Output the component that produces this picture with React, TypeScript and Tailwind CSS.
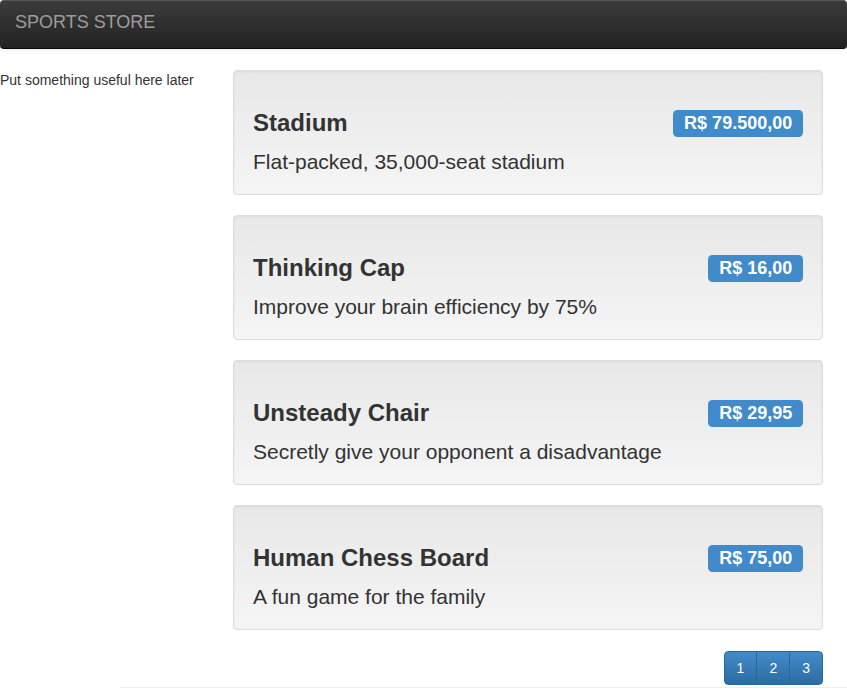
type Product = {
  name: string;
  description: string;
  price: string;
};

const products: Product[] = [
  {
    name: "Stadium",
    description: "Flat-packed, 35,000-seat stadium",
    price: "R$ 79.500,00",
  },
  {
    name: "Thinking Cap",
    description: "Improve your brain efficiency by 75%",
    price: "R$ 16,00",
  },
  {
    name: "Unsteady Chair",
    description: "Secretly give your opponent a disadvantage",
    price: "R$ 29,95",
  },
  {
    name: "Human Chess Board",
    description: "A fun game for the family",
    price: "R$ 75,00",
  },
];

function ProductWell({ product }: { product: Product }) {
  return (
    <div className="mb-[20px] h-[125px] rounded-[4px] border border-[#dcdcdc] bg-linear-to-b from-[#e8e8e8] to-[#f5f5f5] px-[19px] pt-[39px] shadow-[inset_0_1px_3px_rgba(0,0,0,0.05)]">
      <div className="flex items-start justify-between">
        <h3 className="text-[24px] font-bold leading-[26px] text-[#333]">
          {product.name}
        </h3>
        <span className="rounded-[4.5px] bg-[#428bca] px-[10.8px] pt-[3.6px] pb-[5.4px] text-[18px] font-bold leading-[18px] text-white">
          {product.price}
        </span>
      </div>
      <div className="mt-[10px] text-[21px] leading-[29px] text-[#333]">
        {product.description}
      </div>
    </div>
  );
}

export default function App() {
  const pages = [1, 2, 3];

  return (
    <div className="min-h-[690px] bg-white font-['Liberation_Sans',Arial,sans-serif] text-[14px] text-[#333]">
      <nav className="flex h-[49px] items-start rounded-[4px] border-b border-[#080808] bg-linear-to-b from-[#3c3c3c] to-[#222] shadow-[inset_0_1px_0_rgba(255,255,255,0.15),0_1px_5px_rgba(0,0,0,0.075)]">
        <span className="pl-[15px] pt-[12px] text-[18px] leading-[20px] text-[#9d9d9d]">
          SPORTS STORE
        </span>
      </nav>

      <div className="mt-[21px] flex">
        <div className="w-[233px] shrink-0 leading-[20px]">
          Put something useful here later
        </div>

        <div className="w-[590px] shrink-0">
          {products.map((product) => (
            <ProductWell key={product.name} product={product} />
          ))}

          <div className="flex justify-end pt-px">
            <div className="flex overflow-hidden rounded-[4px]">
              {pages.map((page, index) => (
                <button
                  key={page}
                  type="button"
                  className={`border border-[#2b669a] bg-linear-to-b from-[#428bca] to-[#2d6ca2] px-[12px] py-[6px] text-[14px] leading-[20px] text-white ${
                    index > 0 ? "-ml-px" : ""
                  } ${index === 0 ? "rounded-l-[4px]" : ""} ${
                    index === pages.length - 1 ? "rounded-r-[4px]" : ""
                  }`}
                >
                  {page}
                </button>
              ))}
            </div>
          </div>
        </div>
      </div>

      <div className="ml-[120px] mt-[2px] border-t border-[#eee]" />
    </div>
  );
}
